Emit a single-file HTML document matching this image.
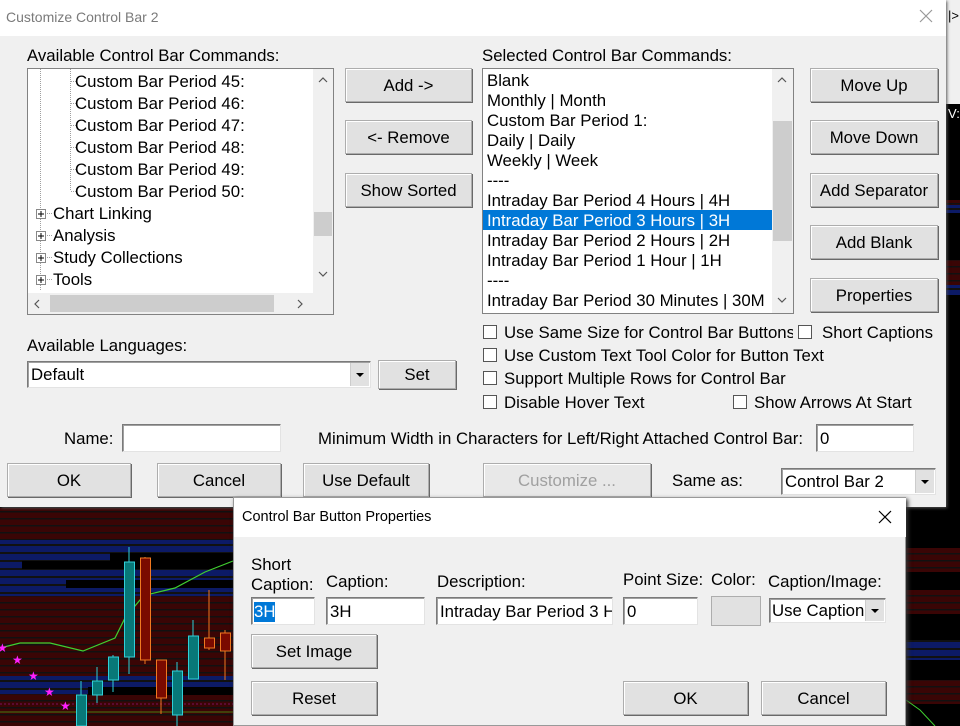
<!DOCTYPE html>
<html><head><meta charset="utf-8"><style>
*{margin:0;padding:0;box-sizing:border-box}
body{width:960px;height:726px;position:relative;overflow:hidden;background:#000;font-family:"Liberation Sans",Arial,sans-serif;font-size:16.8px;color:#000}
.a{position:absolute;white-space:nowrap}
.btn{position:absolute;background:#e1e1e1;border:1px solid #adadad;box-shadow:inset 1px 1px 0 #fff,1px 1px 0 #696969;text-align:center;display:flex;align-items:center;justify-content:center;padding-top:1px}
.inp{position:absolute;background:#fff;border:1px solid #7a7a7a;border-right-color:#e3e3e3;border-bottom-color:#e3e3e3;box-shadow:inset 1px 1px 0 #a0a0a0;padding-left:3px;display:flex;align-items:center;padding-top:1px}
.cb{position:absolute;width:14px;height:14px;background:#fff;border:1px solid #555}
.dd{position:absolute;right:1px;top:1px;bottom:1px;width:19px;background:#e1e1e1;border-left:1px solid #ccc;display:flex;align-items:center;justify-content:center}
.dd:after{content:"";border-left:4px solid transparent;border-right:4px solid transparent;border-top:4px solid #000}
.li{position:absolute;left:4px;height:20px;line-height:22px}
</style></head><body>
<svg class="a" style="left:0;top:0" width="960" height="726">
<defs>
<pattern id="red" width="7" height="7" patternUnits="userSpaceOnUse"><rect width="7" height="7" fill="#3a0505"/><rect width="7" height="1.5" fill="#111"/></pattern>
<pattern id="blue" width="7" height="8" patternUnits="userSpaceOnUse"><rect width="7" height="8" fill="#0c1a66"/><rect width="7" height="2" fill="#111"/></pattern>
</defs>
<rect width="960" height="726" fill="#000"/>
<rect x="0" y="508" width="233" height="218" fill="url(#red)"/>
<rect x="0" y="540" width="233" height="56" fill="url(#blue)"/>
<rect x="0" y="676" width="233" height="18" fill="url(#blue)"/>
<rect x="110" y="553" width="123" height="8" fill="#000"/>
<rect x="22" y="561" width="211" height="8" fill="#000"/>
<rect x="66" y="580" width="167" height="8" fill="#000"/>
<rect x="88" y="687" width="145" height="8" fill="#000"/>
<rect x="906" y="508" width="54" height="218" fill="#000"/>
<rect x="906" y="548" width="54" height="24" fill="url(#red)"/>
<rect x="906" y="590" width="54" height="24" fill="url(#red)"/>
<rect x="906" y="640" width="54" height="20" fill="url(#blue)"/>
<rect x="906" y="680" width="54" height="24" fill="url(#red)"/>
<rect x="946" y="200" width="14" height="10" fill="url(#red)"/>
<rect x="946" y="205" width="14" height="8" fill="url(#blue)"/>
<rect x="946" y="260" width="14" height="30" fill="url(#red)"/>
<rect x="946" y="285" width="14" height="10" fill="url(#blue)"/>
<line x1="0" y1="704" x2="233" y2="704" stroke="#7a1060" stroke-dasharray="2,2"/>
<line x1="0" y1="712" x2="233" y2="712" stroke="#4a7a10"/>
<polyline points="0,648 20,643 50,643 83,651 115,638 125,618 140,600 150,594 175,588 205,572 233,561" fill="none" stroke="#40d030" stroke-width="1.2"/>
<polyline points="906,700 920,710 935,726" fill="none" stroke="#40d030"/>
<g stroke="#30d0d8" fill="#087878"><line x1="129" y1="547" x2="129" y2="674"/><rect x="124.5" y="562" width="10" height="95"/>
<line x1="113" y1="655" x2="113" y2="692"/><rect x="108.5" y="657" width="10" height="23"/>
<line x1="97" y1="667" x2="97" y2="703"/><rect x="92.5" y="681" width="10" height="14"/>
<line x1="81" y1="681" x2="81" y2="726"/><rect x="76.5" y="695" width="10" height="31"/>
<line x1="177" y1="662" x2="177" y2="726"/><rect x="172.5" y="671" width="10" height="44"/>
<line x1="193" y1="620" x2="193" y2="672"/><rect x="188.5" y="636" width="10" height="43"/></g>
<g stroke="#f07820" fill="#7a0a00"><line x1="145" y1="557" x2="145" y2="664"/><rect x="140.5" y="558" width="10" height="102"/>
<line x1="161" y1="660" x2="161" y2="714"/><rect x="156.5" y="660" width="10" height="38"/>
<line x1="209" y1="590" x2="209" y2="650"/><rect x="204.5" y="638" width="10" height="10"/>
<line x1="225" y1="630" x2="225" y2="680"/><rect x="220.5" y="633" width="10" height="18"/></g>
<g fill="#ff20ff" font-size="12" font-family="DejaVu Sans"><text x="-3" y="652">★</text><text x="12" y="664">★</text><text x="28" y="680">★</text><text x="44" y="696">★</text><text x="60" y="710">★</text></g>
<rect x="946" y="0" width="14" height="36" fill="#f0f0f0"/>
<text x="948" y="20" font-size="13" fill="#000">|&gt;:</text>
<rect x="946" y="36" width="14" height="68" fill="#f0f0f0"/>
<text x="948" y="118" font-size="13" fill="#fff">V:</text>
</svg>

<div class="a" style="left:0;top:0;width:946px;height:507px;background:#f0f0f0;box-shadow:1px 1px 3px #555">
<div class="a" style="left:0;top:0;width:946px;height:36px;background:#fff"></div>
<div class="a" style="left:6px;top:9px;font-size:14px;color:#7a7a7a">Customize Control Bar 2</div>
<svg class="a" style="left:919px;top:9px" width="14" height="14"><path d="M1 1L13 13M13 1L1 13" stroke="#999" stroke-width="1.2"/></svg>

<div class="a" style="left:27px;top:46px">Available Control Bar Commands:</div>
<div class="a" style="left:27px;top:68px;width:307px;height:247px;background:#fff;border:1px solid #828282">
 <svg class="a" style="left:0;top:0" width="290" height="226">
  <g stroke="#a0a0a0" stroke-dasharray="1,1"><line x1="12.5" y1="0" x2="12.5" y2="222"/><line x1="42.5" y1="0" x2="42.5" y2="122"/>
  <line x1="43" y1="12.5" x2="48" y2="12.5"/><line x1="43" y1="34.5" x2="48" y2="34.5"/><line x1="43" y1="56.5" x2="48" y2="56.5"/><line x1="43" y1="78.5" x2="48" y2="78.5"/><line x1="43" y1="100.5" x2="48" y2="100.5"/><line x1="43" y1="122.5" x2="48" y2="122.5"/>
  <line x1="17" y1="144.5" x2="24" y2="144.5"/><line x1="17" y1="166.5" x2="24" y2="166.5"/><line x1="17" y1="188.5" x2="24" y2="188.5"/><line x1="17" y1="210.5" x2="24" y2="210.5"/></g>
  <g fill="#fff" stroke="#888"><rect x="8.5" y="140.5" width="9" height="9"/><rect x="8.5" y="162.5" width="9" height="9"/><rect x="8.5" y="184.5" width="9" height="9"/><rect x="8.5" y="206.5" width="9" height="9"/></g>
  <g stroke="#000"><line x1="10" y1="145" x2="16" y2="145"/><line x1="13" y1="142" x2="13" y2="148"/><line x1="10" y1="167" x2="16" y2="167"/><line x1="13" y1="164" x2="13" y2="170"/><line x1="10" y1="189" x2="16" y2="189"/><line x1="13" y1="186" x2="13" y2="192"/><line x1="10" y1="211" x2="16" y2="211"/><line x1="13" y1="208" x2="13" y2="214"/></g>
 </svg>
 <div class="li" style="left:47px;top:2px">Custom Bar Period 45:</div>
 <div class="li" style="left:47px;top:24px">Custom Bar Period 46:</div>
 <div class="li" style="left:47px;top:46px">Custom Bar Period 47:</div>
 <div class="li" style="left:47px;top:68px">Custom Bar Period 48:</div>
 <div class="li" style="left:47px;top:90px">Custom Bar Period 49:</div>
 <div class="li" style="left:47px;top:112px">Custom Bar Period 50:</div>
 <div class="li" style="left:25px;top:134px">Chart Linking</div>
 <div class="li" style="left:25px;top:156px">Analysis</div>
 <div class="li" style="left:25px;top:178px">Study Collections</div>
 <div class="li" style="left:25px;top:200px">Tools</div>
 <div class="a" style="left:285px;top:0;width:20px;height:224px;background:#f0f0f0"></div>
 <div class="a" style="left:286px;top:143px;width:18px;height:24px;background:#cdcdcd"></div>
 <svg class="a" style="left:289px;top:6px" width="12" height="210"><path d="M2 7L6 3L10 7M2 197L6 201L10 197" fill="none" stroke="#555" stroke-width="1.2"/></svg>
 <div class="a" style="left:0;top:224px;width:305px;height:21px;background:#f0f0f0"></div>
 <div class="a" style="left:22px;top:226px;width:224px;height:17px;background:#cdcdcd"></div>
 <svg class="a" style="left:4px;top:228px" width="290" height="14"><path d="M7 3L3 7L7 11M266 3L270 7L266 11" fill="none" stroke="#555" stroke-width="1.2"/></svg>
</div>

<div class="btn" style="left:345px;top:68px;width:127px;height:34px">Add -&gt;</div>
<div class="btn" style="left:345px;top:120px;width:127px;height:34px">&lt;- Remove</div>
<div class="btn" style="left:345px;top:173px;width:127px;height:34px">Show Sorted</div>

<div class="a" style="left:482px;top:46px">Selected Control Bar Commands:</div>
<div class="a" style="left:482px;top:68px;width:312px;height:246px;background:#fff;border:1px solid #828282">
 <div class="a" style="left:0;top:141px;width:289px;height:20px;background:#0078d7"></div>
 <div class="li" style="top:1px">Blank</div>
 <div class="li" style="top:21px">Monthly | Month</div>
 <div class="li" style="top:41px">Custom Bar Period 1:</div>
 <div class="li" style="top:61px">Daily | Daily</div>
 <div class="li" style="top:81px">Weekly | Week</div>
 <div class="li" style="top:101px">----</div>
 <div class="li" style="top:121px">Intraday Bar Period 4 Hours | 4H</div>
 <div class="li" style="top:141px;color:#fff">Intraday Bar Period 3 Hours | 3H</div>
 <div class="li" style="top:161px">Intraday Bar Period 2 Hours | 2H</div>
 <div class="li" style="top:181px">Intraday Bar Period 1 Hour | 1H</div>
 <div class="li" style="top:201px">----</div>
 <div class="li" style="top:221px">Intraday Bar Period 30 Minutes | 30M</div>
 <div class="a" style="left:289px;top:0;width:21px;height:244px;background:#f0f0f0"></div>
 <div class="a" style="left:290px;top:52px;width:19px;height:120px;background:#cdcdcd"></div>
 <svg class="a" style="left:293px;top:6px" width="12" height="234"><path d="M2 7L6 3L10 7M2 223L6 227L10 223" fill="none" stroke="#555" stroke-width="1.2"/></svg>
</div>

<div class="btn" style="left:810px;top:68px;width:128px;height:34px">Move Up</div>
<div class="btn" style="left:810px;top:120px;width:128px;height:34px">Move Down</div>
<div class="btn" style="left:810px;top:173px;width:128px;height:34px">Add Separator</div>
<div class="btn" style="left:810px;top:225px;width:128px;height:34px">Add Blank</div>
<div class="btn" style="left:810px;top:278px;width:128px;height:34px">Properties</div>

<div class="cb" style="left:483px;top:325px"></div><div class="a" style="left:504px;top:323px;width:289px;overflow:hidden">Use Same Size for Control Bar Buttons</div>
<div class="cb" style="left:798px;top:325px"></div><div class="a" style="left:822px;top:323px">Short Captions</div>
<div class="cb" style="left:483px;top:348px"></div><div class="a" style="left:504px;top:346px">Use Custom Text Tool Color for Button Text</div>
<div class="cb" style="left:483px;top:371px"></div><div class="a" style="left:504px;top:369px">Support Multiple Rows for Control Bar</div>
<div class="cb" style="left:483px;top:395px"></div><div class="a" style="left:504px;top:393px">Disable Hover Text</div>
<div class="cb" style="left:733px;top:395px"></div><div class="a" style="left:754px;top:393px">Show Arrows At Start</div>

<div class="a" style="left:27px;top:336px">Available Languages:</div>
<div class="inp" style="left:27px;top:361px;width:344px;height:27px">Default<div class="dd"></div></div>
<div class="btn" style="left:378px;top:360px;width:78px;height:29px">Set</div>

<div class="a" style="left:64px;top:429px">Name:</div>
<div class="inp" style="left:122px;top:424px;width:159px;height:28px"></div>
<div class="a" style="left:318px;top:429px">Minimum Width in Characters for Left/Right Attached Control Bar:</div>
<div class="inp" style="left:816px;top:424px;width:98px;height:28px">0</div>

<div class="btn" style="left:7px;top:463px;width:124px;height:34px">OK</div>
<div class="btn" style="left:157px;top:463px;width:124px;height:34px">Cancel</div>
<div class="btn" style="left:303px;top:463px;width:126px;height:34px">Use Default</div>
<div class="btn" style="left:483px;top:463px;width:168px;height:34px;color:#a0a0a0;background:#e8e8e8">Customize ...</div>
<div class="a" style="left:672px;top:471px">Same as:</div>
<div class="inp" style="left:781px;top:468px;width:155px;height:27px">Control Bar 2<div class="dd"></div></div>
</div>

<div class="a" style="left:233px;top:497px;width:673px;height:229px;background:#f0f0f0;border:1px solid #999;box-shadow:2px 2px 4px #333">
<div class="a" style="left:0;top:0;width:672px;height:39px;background:#fff"></div>
<div class="a" style="left:8px;top:11px;font-size:14.5px">Control Bar Button Properties</div>
<svg class="a" style="left:644px;top:12px" width="14" height="14"><path d="M1 1L13 13M13 1L1 13" stroke="#000" stroke-width="1.2"/></svg>
<div class="a" style="left:17px;top:57px">Short</div>
<div class="a" style="left:17px;top:77px">Caption:</div>
<div class="a" style="left:92px;top:74px">Caption:</div>
<div class="a" style="left:203px;top:74px">Description:</div>
<div class="a" style="left:389px;top:72px">Point Size:</div>
<div class="a" style="left:477px;top:72px">Color:</div>
<div class="a" style="left:534px;top:74px">Caption/Image:</div>
<div class="inp" style="left:17px;top:99px;width:64px;height:28px;padding-left:2px"><span style="background:#0078d7;color:#fff">3H</span></div>
<div class="inp" style="left:92px;top:99px;width:99px;height:28px">3H</div>
<div class="inp" style="left:202px;top:99px;width:177px;height:28px;overflow:hidden">Intraday Bar Period 3 H</div>
<div class="inp" style="left:389px;top:99px;width:75px;height:28px">0</div>
<div class="btn" style="left:477px;top:98px;width:50px;height:30px;box-shadow:none"></div>
<div class="inp" style="left:535px;top:100px;width:117px;height:25px;padding-left:2px;overflow:hidden">Use Caption<div class="dd"></div></div>
<div class="btn" style="left:17px;top:136px;width:126px;height:34px">Set Image</div>
<div class="btn" style="left:17px;top:183px;width:126px;height:34px">Reset</div>
<div class="btn" style="left:389px;top:183px;width:125px;height:34px">OK</div>
<div class="btn" style="left:527px;top:183px;width:125px;height:34px">Cancel</div>
</div>
</body></html>
